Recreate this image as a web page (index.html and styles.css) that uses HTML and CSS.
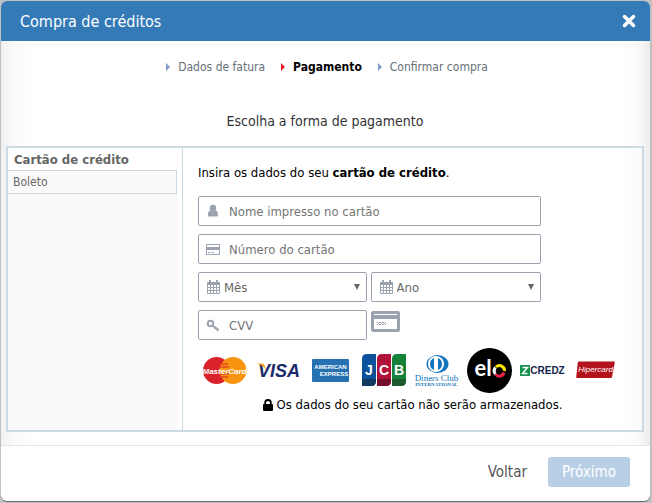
FILE: index.html
```html
<!DOCTYPE html>
<html lang="pt-BR">
<head>
    <meta charset="UTF-8">
    <meta name="viewport" content="width=device-width, initial-scale=1.0">
    <title>Compra de créditos</title>
    <link rel="stylesheet" href="styles.css">
</head>
<body>
    <div class="modal">
        <header class="modal-header">
            <h1>Compra de créditos</h1>
            <button type="button" class="close" aria-label="Fechar">
                <svg width="14" height="14" viewBox="0 0 14 14"><path d="M2.500 2.500l9 9M11.500 2.500l-9 9" stroke="#fff" stroke-width="3.500" stroke-linecap="round"/></svg>
            </button>
        </header>

        <main class="modal-body">
            <ol class="steps">
                <li>Dados de fatura</li>
                <li class="active">Pagamento</li>
                <li>Confirmar compra</li>
            </ol>
            <h2>Escolha a forma de pagamento</h2>

            <div class="payment">
                <nav class="methods">
                    <a href="#cartao" class="selected">Cartão de crédito</a>
                    <a href="#boleto">Boleto</a>
                </nav>

                <form class="card-form" id="cartao">
                    <p class="intro">Insira os dados do seu <strong>cartão de crédito</strong>.</p>

                    <div class="fields">
                        <div class="field wide">
                            <label for="nome" aria-label="Nome impresso no cartão">
                                <svg width="14" height="14" viewBox="0 0 14 14"><circle cx="7" cy="4" r="3.2"/><path d="M2 11c0-3 1-4.500 2.500-4.700a4 4 0 0 0 5 0C11 6.500 12 8 12 11c0 1-.6 1.600-1.500 1.600h-7C2.600 12.600 2 12 2 11z"/></svg>
                            </label>
                            <input type="text" id="nome" placeholder="Nome impresso no cartão">
                        </div>
                        <div class="field wide">
                            <label for="numero" aria-label="Número do cartão">
                                <svg width="14" height="14" viewBox="0 0 14 14"><path fill-rule="evenodd" d="M1 2h12a1 1 0 0 1 1 1v9a1 1 0 0 1-1 1H1a1 1 0 0 1-1-1V3a1 1 0 0 1 1-1zM1 3v2h12V3zM1 8v4h12V8z"/><path d="M2 10h2v1H2zM5 10h3v1H5z"/></svg>
                            </label>
                            <input type="text" id="numero" placeholder="Número do cartão">
                        </div>
                        <div class="field date">
                            <label for="mes" aria-label="Mês">
                                <svg width="13" height="14" viewBox="0 0 13 14"><path fill-rule="evenodd" d="M1 2h11a1 1 0 0 1 1 1v10a1 1 0 0 1-1 1H1a1 1 0 0 1-1-1V3a1 1 0 0 1 1-1zM1 5v2h2V5zM4 5v2h2V5zM7 5v2h2V5zM10 5v2h2V5zM1 8v2h2V8zM4 8v2h2V8zM7 8v2h2V8zM10 8v2h2V8zM1 11v2h2v-2zM4 11v2h2v-2zM7 11v2h2v-2zM10 11v2h2v-2z"/><path d="M2 0h2v4H2zM9 0h2v4H9z"/></svg>
                            </label>
                            <select id="mes"><option>Mês</option></select>
                            <svg class="arrow" width="6" height="6" viewBox="0 0 6 6"><path d="M0 0h6L3 6z"/></svg>
                        </div>
                        <div class="field date">
                            <label for="ano" aria-label="Ano">
                                <svg width="13" height="14" viewBox="0 0 13 14"><path fill-rule="evenodd" d="M1 2h11a1 1 0 0 1 1 1v10a1 1 0 0 1-1 1H1a1 1 0 0 1-1-1V3a1 1 0 0 1 1-1zM1 5v2h2V5zM4 5v2h2V5zM7 5v2h2V5zM10 5v2h2V5zM1 8v2h2V8zM4 8v2h2V8zM7 8v2h2V8zM10 8v2h2V8zM1 11v2h2v-2zM4 11v2h2v-2zM7 11v2h2v-2zM10 11v2h2v-2z"/><path d="M2 0h2v4H2zM9 0h2v4H9z"/></svg>
                            </label>
                            <select id="ano"><option>Ano</option></select>
                            <svg class="arrow" width="6" height="6" viewBox="0 0 6 6"><path d="M0 0h6L3 6z"/></svg>
                        </div>
                        <div class="field">
                            <label for="cvv" aria-label="CVV">
                                <svg width="14" height="14" viewBox="0 0 14 14"><g fill="none" stroke="#9ba3b0"><circle cx="4.500" cy="5.500" r="2.800" stroke-width="2"/><path d="M6.500 7.500l6 4.500" stroke-width="2"/><path d="M8.500 11l1.500-2M11 13l1.500-2" stroke-width="1.500"/></g></svg>
                            </label>
                            <input type="text" id="cvv" placeholder="CVV">
                        </div>
                        <svg class="cvv-card" width="29" height="21" viewBox="0 0 29 21"><path fill-rule="evenodd" d="M2 0h25a2 2 0 0 1 2 2v17a2 2 0 0 1-2 2H2a2 2 0 0 1-2-2V2a2 2 0 0 1 2-2zM3 3v1h23V3zM3 8v10h23V8z"/><path d="M6 11l3 3M9 11l-3 3M9 11l3 3M12 11l-3 3M12 11l3 3M15 11l-3 3" stroke="#9ba3b0" stroke-width="1"/></svg>
                    </div>

                    <div class="brands">
                        <!-- MasterCard -->
                        <svg viewBox="0 0 45 45">
                            <circle cx="14.500" cy="22.500" r="13.500" fill="#d9222a"/>
                            <circle cx="31" cy="22.500" r="13.500" fill="#f79410"/>
                            <path d="M19 16h7M18 19h9M18 26h9M19 29h7" stroke="#d9222a"/>
                            <text x="22.500" y="26" class="mastercard">MasterCard</text>
                        </svg>
                        <!-- Visa -->
                        <svg viewBox="0 0 45 45">
                            <text x="24" y="29" class="visa">VISA</text>
                            <path d="M1 15.500h6c2 0 2.500 1 3 3l1 4c-2-4-5-6-10-7z" fill="#f5a51b"/>
                        </svg>
                        <!-- American Express -->
                        <svg viewBox="0 0 45 45">
                            <rect x="4" y="11" width="37" height="23" rx="1" fill="#2671b2"/>
                            <text x="22.500" y="21" class="amex">AMERICAN</text>
                            <text x="26" y="28" class="amex">EXPRESS</text>
                        </svg>
                        <!-- JCB -->
                        <svg viewBox="0 0 45 45">
                            <path d="M6 6h9v27q0 5-5 5H1V11q0-5 5-5z" fill="#0c5199"/>
                            <path d="M21 6h9v27q0 5-5 5h-9V11q0-5 5-5z" fill="#b0123a"/>
                            <path d="M36 6h9v27q0 5-5 5h-9V11q0-5 5-5z" fill="#168139"/>
                            <path d="M1 31h14v2q0 5-5 5H1z" fill="#123860"/>
                            <path d="M16 31h14v2q0 5-5 5h-9z" fill="#740d2b"/>
                            <path d="M31 31h14v2q0 5-5 5h-9z" fill="#1b5a2e"/>
                            <text x="8" y="27" class="jcb">J</text>
                            <text x="23" y="27" class="jcb">C</text>
                            <text x="38" y="27" class="jcb">B</text>
                        </svg>
                        <!-- Diners Club -->
                        <svg viewBox="0 0 45 45">
                            <ellipse cx="23.500" cy="16" rx="11" ry="9" fill="#1375bc"/>
                            <circle cx="22" cy="16" r="8" fill="#fff"/>
                            <path d="M20 10a6.500 6.500 0 0 0 0 12zM24 10a6.500 6.500 0 0 1 0 12z" fill="#1375bc"/>
                            <text x="22.500" y="33" class="diners">Diners Club</text>
                            <text x="22.500" y="38" class="diners small">INTERNATIONAL</text>
                        </svg>
                        <!-- Elo -->
                        <svg viewBox="0 0 45 45">
                            <circle cx="22.500" cy="22.500" r="22.500"/>
                            <text x="16" y="28" class="elo">el</text>
                            <g fill="none" stroke-width="3">
                                <path d="M28.500 26a5 5 0 0 1 0-6.500" stroke="#fff"/>
                                <path d="M29 19a5 5 0 0 1 8.500 4" stroke="#ffe600"/>
                                <path d="M37 24.500a5 5 0 0 1-8.500 2" stroke="#ee2344"/>
                            </g>
                        </svg>
                        <!-- Credz -->
                        <svg viewBox="0 0 45 45">
                            <rect y="17" width="10" height="11" fill="#169150"/>
                            <path d="M2.500 19.500h5l-5 6h5" fill="none" stroke="#fff" stroke-width="1.500"/>
                            <text x="27.500" y="26" class="credz">CREDZ</text>
                        </svg>
                        <!-- Hipercard -->
                        <svg viewBox="0 0 45 45">
                            <path d="M6 13.500h35q1 0 .8 1L39 29q-.3 1-1.300 1H4q-1 0-.8-1L4.800 14.500q.2-1 1.200-1z" fill="#b3131b"/>
                            <text x="22.500" y="24" class="hipercard">Hipercard</text>
                        </svg>
                    </div>

                    <p class="notice">
                        <svg width="10" height="12" viewBox="0 0 10 12"><path d="M2.200 6V3.500a2.800 2.500 0 0 1 5.600 0V6" fill="none" stroke="#000" stroke-width="1.800"/><rect y="5" width="10" height="7" rx="1"/></svg>
                        Os dados do seu cartão não serão armazenados.
                    </p>
                </form>
            </div>
        </main>

        <footer class="modal-footer">
            <button type="button" class="back">Voltar</button>
            <button type="button" class="next" disabled>Próximo</button>
        </footer>
    </div>
</body>
</html>
```
FILE: styles.css
```css
* { margin: 0; padding: 0; box-sizing: border-box; }

body {
    min-height: 100vh;
    display: flex;
    padding: 1px 2px 2px 1px;
    background: #c0c0c0;
    font-family: Tahoma, "DejaVu Sans Condensed", "Noto Sans", sans-serif;
    font-size: 12px;
    color: #000;
}

button, input, select { font-family: inherit; }

.modal {
    flex: 1;
    display: flex;
    flex-direction: column;
    background: #fff;
    border-radius: 6px;
    overflow: hidden;
    box-shadow: 0 1px 0 #707070;
}

.modal-header {
    display: flex;
    justify-content: space-between;
    align-items: center;
    height: 40px;
    padding: 0 14px 0 19px;
    background: #337ab7;
    color: #fff;
}

.modal-header h1 {
    font-size: 16px;
    font-weight: normal;
}

.close {
    display: flex;
    border: none;
    background: none;
}

.modal-body {
    flex: 1;
    padding: 16px 6px 13px 5px;
    background:
        linear-gradient(to right, #f0f0f0, #fafafa 12px, #fff 30px, transparent 30px),
        linear-gradient(to left, #ececec, #fafafa 12px, #fff 30px);
}

.steps {
    display: flex;
    justify-content: center;
    gap: 16px;
    padding-left: 4px;
    list-style: none;
    line-height: 20px;
    color: #667078;
}

.steps li {
    display: flex;
    align-items: center;
    gap: 8px;
}

.steps li::before {
    content: "";
    border: 4px solid transparent;
    border-left-color: #7f9acb;
    border-right: none;
}

.steps .active {
    color: #000;
    font-weight: bold;
}

.steps .active::before { border-left-color: #ee1c25; }

.modal-body h2 {
    margin: 34px 0 15px;
    font-size: 14px;
    font-weight: normal;
    line-height: 20px;
    text-align: center;
    color: #333;
}

.payment {
    display: flex;
    border: 2px solid #ccdbe3;
}

.methods {
    width: 175px;
    padding-right: 5px;
    background: linear-gradient(#fafafa, #fafafa) no-repeat 0 0 / 169px 100%, #fff;
    border-right: 1px solid #ccdbe3;
}

.methods a {
    display: block;
    height: 24px;
    padding: 0 5px;
    border: 1px solid #ccdbe3;
    border-left: none;
    line-height: 23px;
    color: #666;
    text-decoration: none;
}

.methods .selected {
    height: 22px;
    padding: 0 6px;
    border: none;
    background: #fff;
    font-size: 13px;
    font-weight: bold;
}

.card-form {
    flex: 1;
    padding: 15px;
    background: linear-gradient(to left, #fafafa, #fff 20px);
    font-size: 13px;
}

.intro { line-height: 20px; }

.fields {
    display: grid;
    grid-template-columns: 169fr 171fr;
    gap: 8px 4px;
    width: 80%;
    margin: 13px 0 8px;
}

.field {
    display: flex;
    align-items: center;
    min-width: 0;
    height: 30px;
    padding: 0 6px 0 7px;
    gap: 9px;
    background: #fff;
    border: 1px solid #9ba3b0;
    border-radius: 2px;
}

.wide { grid-column: 1 / 3; }

.date {
    gap: 4px;
    padding-left: 8px;
}

.field label { display: flex; }

.field svg, .cvv-card { fill: #9ba3b0; }

.cvv-card { margin-top: 1px; }

.field .arrow { fill: #666; }

.field input, .field select {
    flex: 1;
    min-width: 0;
    border: none;
    outline: none;
    background: none;
    appearance: none;
    font-size: 13px;
    color: #666;
}

.field input::placeholder { color: #757575; }

.brands {
    display: grid;
    grid-template-columns: repeat(8, 1fr);
    justify-items: center;
    padding-right: 5px;
}

.brands svg {
    width: 45px;
    height: 45px;
}

.brands text {
    text-anchor: middle;
    font-family: "Liberation Sans", sans-serif;
    font-weight: bold;
    fill: #fff;
}

.brands .mastercard { font-size: 8px; font-style: italic; }
.brands .visa { font-size: 18px; font-style: italic; fill: #1a2a6c; }
.brands .amex { font-size: 6px; }
.brands .jcb { font-size: 14px; }
.brands .diners { font-family: "Liberation Serif", serif; font-size: 9px; font-weight: normal; fill: #1375bc; }
.brands .small { font-size: 5px; font-weight: bold; }
.brands .elo { font-family: Lato, sans-serif; font-size: 22px; }
.brands .credz { font-size: 10px; fill: #14264d; }
.brands .hipercard { font-size: 8px; font-style: italic; font-weight: normal; }

.notice {
    display: flex;
    justify-content: center;
    align-items: center;
    gap: 4px;
    margin-top: 2px;
    line-height: 20px;
}

.modal-footer {
    display: flex;
    justify-content: flex-end;
    align-items: center;
    gap: 21px;
    padding: 11px 20px 14px;
    border-top: 1px solid #e5e5e5;
}

.modal-footer button {
    height: 30px;
    border: none;
    font-size: 15px;
}

.back {
    background: none;
    color: #555;
}

.next {
    padding: 0 14px;
    border-radius: 3px;
    background: #b8cfe6;
    color: #fff;
}
```
